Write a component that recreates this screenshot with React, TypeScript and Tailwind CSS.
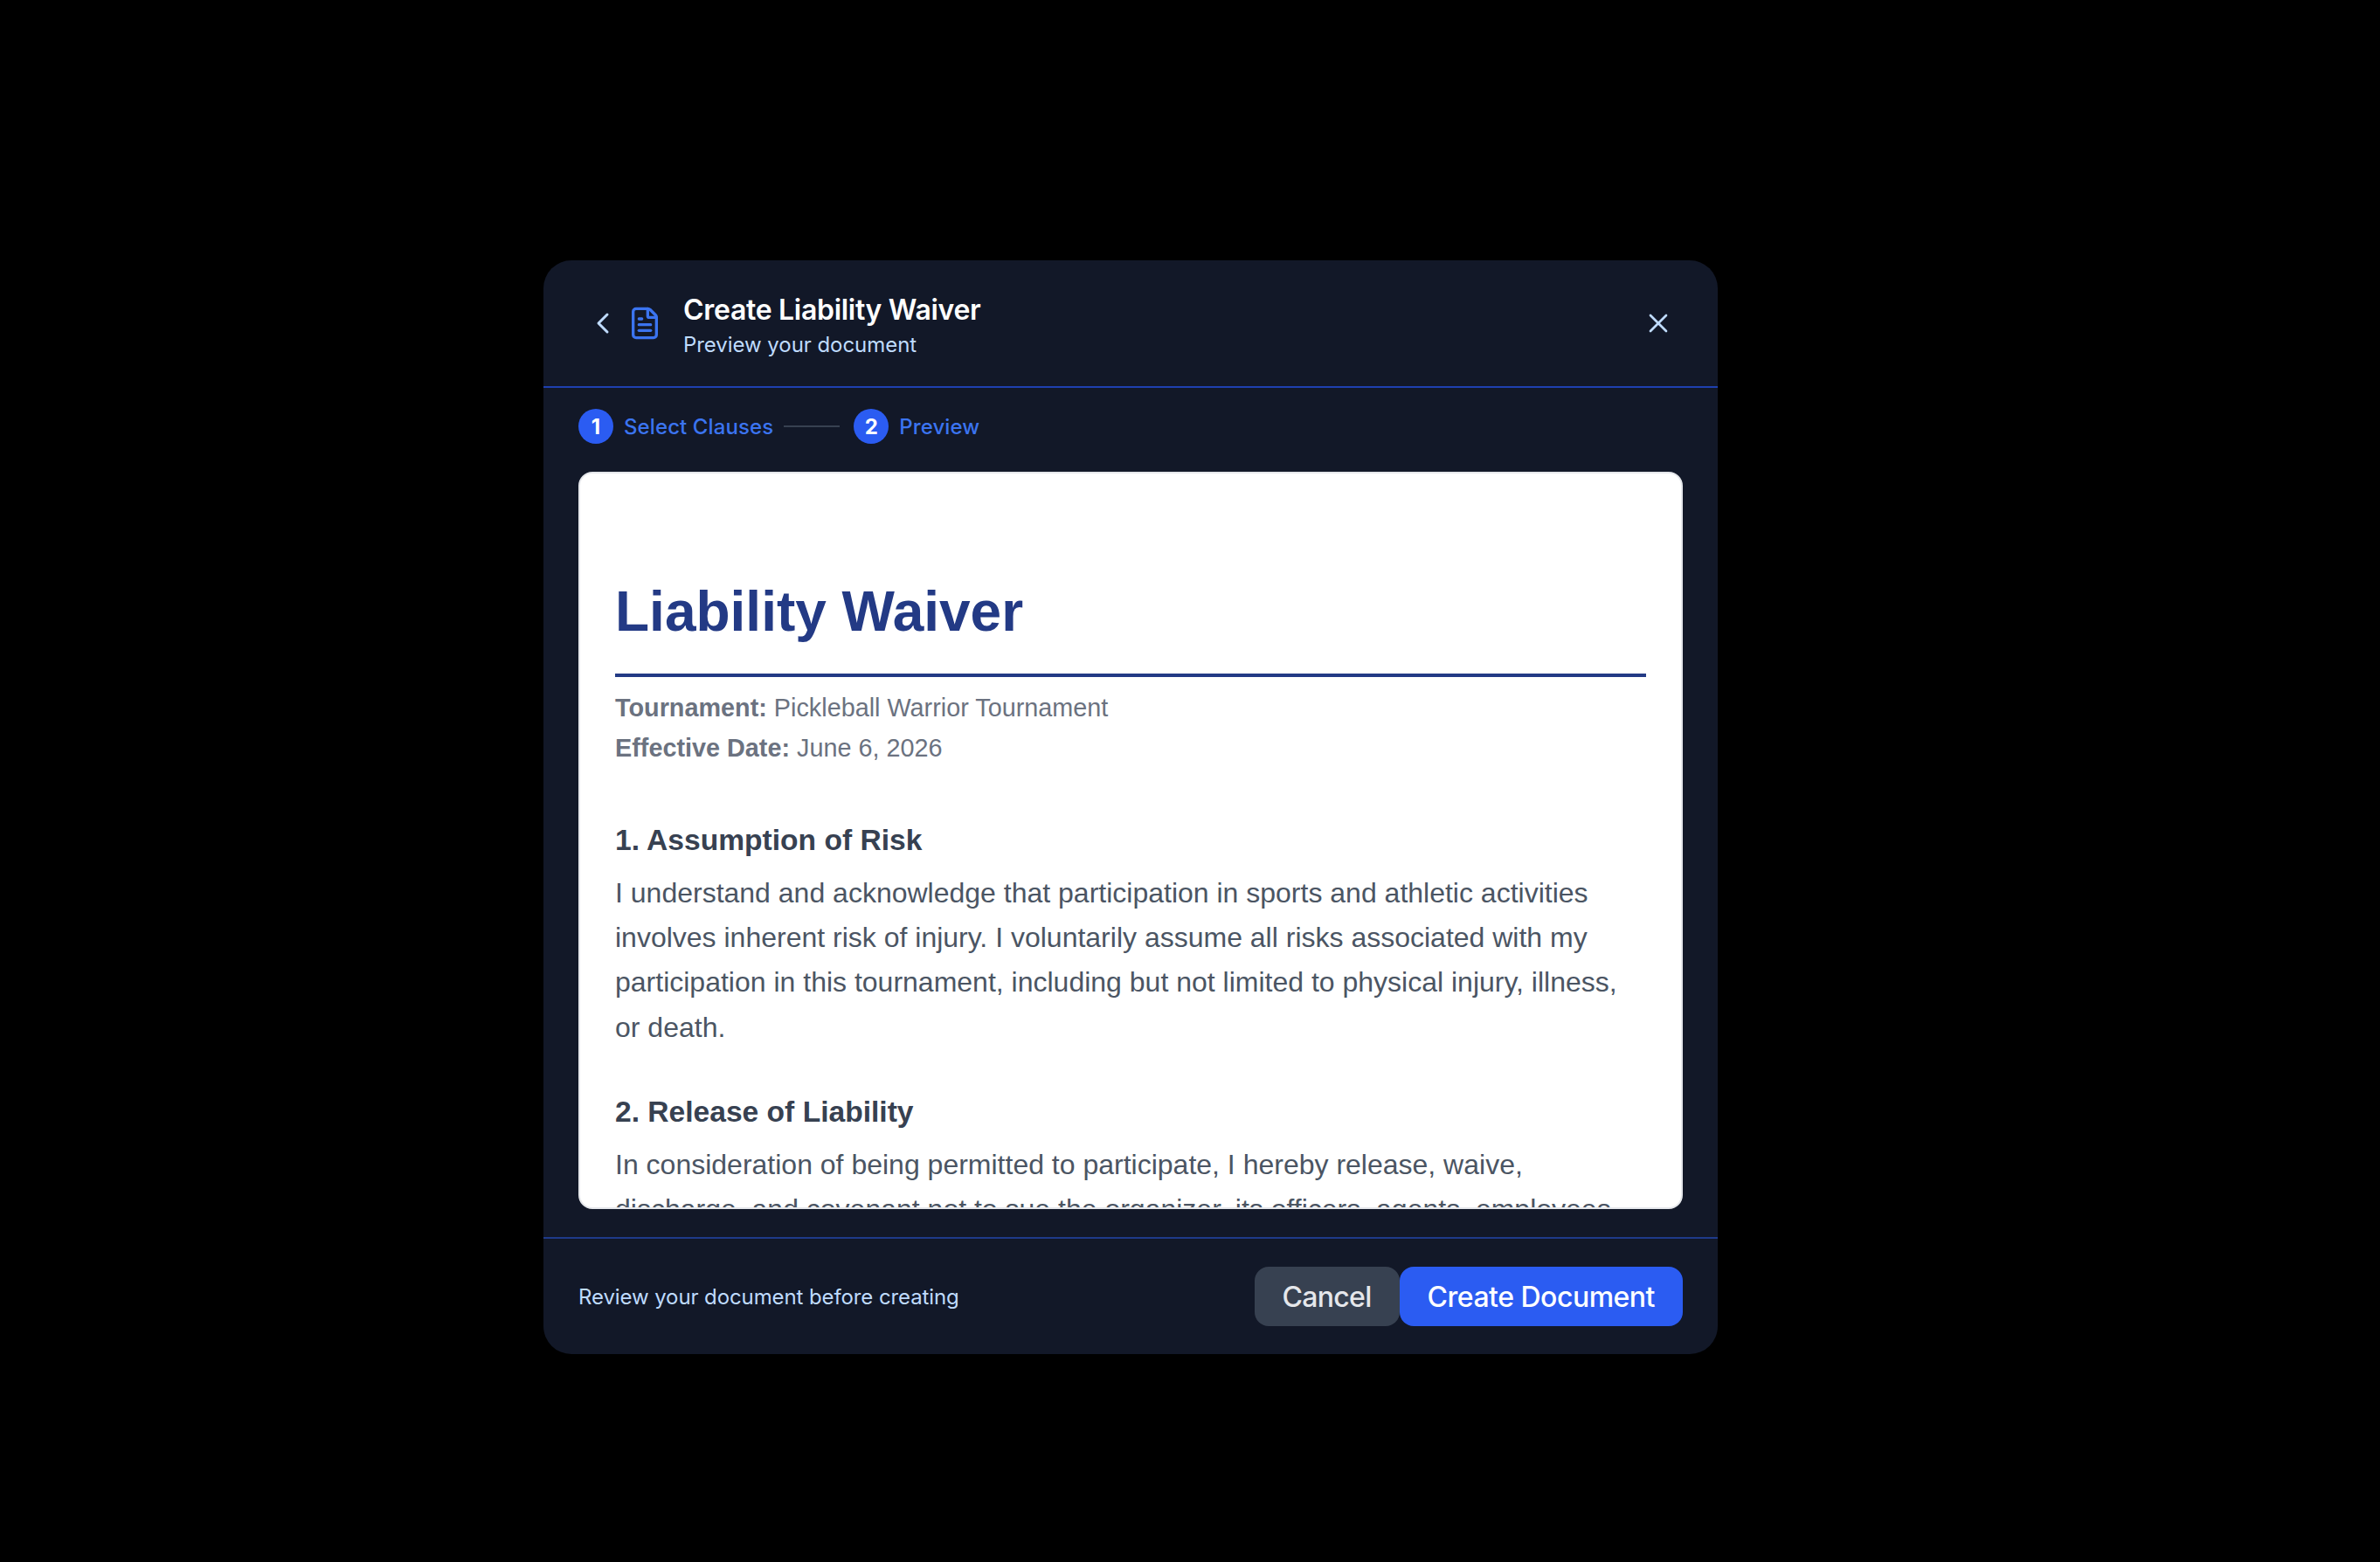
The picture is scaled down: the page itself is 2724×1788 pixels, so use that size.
import { ChevronLeft, FileText, X } from 'lucide-react';

const inter = { fontFamily: 'Inter, sans-serif' };

function Step({ num, label }: { num: number; label: string }) {
  return (
    <div className="flex items-center gap-3">
      <div className="w-10 h-10 pt-px rounded-full bg-[#2b5cf2] flex items-center justify-center text-white text-[24px] font-bold leading-none">
        {num}
      </div>
      <span className="pt-0.5 text-[24px] font-medium tracking-[0.1px] text-[#3b74f0] leading-none">{label}</span>
    </div>
  );
}

export default function App() {
  return (
    <div className="min-h-screen bg-black pl-[622px] pt-[298px]">
      <div
        style={inter}
        className="w-[1344px] h-[1252px] bg-[#121828] rounded-[32px] flex flex-col overflow-hidden"
      >
        {/* Header */}
        <div className="h-[146px] px-10 flex items-center justify-between border-b-2 border-[#1e40af] shrink-0">
          <div className="flex items-center">
            <button className="p-2 text-[#bfdbfe]">
              <ChevronLeft className="w-10 h-10" strokeWidth={1.8} />
            </button>
            <FileText className="w-10 h-10 text-[#3b74f0]" strokeWidth={2} />
            <div className="ml-6 mt-0.5">
              <h2 className="text-[32px] font-semibold tracking-[-0.3px] text-white leading-[48px]">
                Create Liability Waiver
              </h2>
              <p className="text-[24px] tracking-[-0.05px] text-[#bfdbfe] leading-[32px]">Preview your document</p>
            </div>
          </div>
          <button className="p-2.5 text-[#bfdbfe]">
            <X className="w-9 h-9" strokeWidth={1.8} />
          </button>
        </div>

        {/* Steps */}
        <div className="flex items-center px-10 pt-6 pb-8 shrink-0">
          <Step num={1} label="Select Clauses" />
          <div className="w-16 h-0.5 bg-[#374151] mx-3" />
          <div className="ml-1">
            <Step num={2} label="Preview" />
          </div>
        </div>

        {/* Document preview */}
        <div className="flex-1 min-h-0 mx-10 bg-white rounded-2xl border-2 border-[#e5e7eb] overflow-hidden">
          <div className="px-10 pt-[118px]" style={{ fontFamily: '"Liberation Sans", Arial, sans-serif' }}>
            <h1 className="text-[64px] font-bold text-[#233a85] leading-[80px] pb-[31px] border-b-4 border-[#233a85]">
              Liability Waiver
            </h1>
            <div className="mt-[12px] text-[28.8px] leading-[46px] text-[#6b7280]">
              <p>
                <strong>Tournament:</strong> Pickleball Warrior Tournament
              </p>
              <p>
                <strong>Effective Date:</strong> June 6, 2026
              </p>
            </div>
            <h3 className="mt-[61px] text-[33.6px] font-bold text-[#374151] leading-[44px]">1. Assumption of Risk</h3>
            <p className="mt-[13px] text-[32px] leading-[51.2px] text-[#4b5563]">
              I understand and acknowledge that participation in sports and athletic activities involves inherent risk
              of injury. I voluntarily assume all risks associated with my participation in this tournament, including
              but not limited to physical injury, illness, or death.
            </p>
            <h3 className="mt-[49px] text-[33.6px] font-bold text-[#374151] leading-[44px]">2. Release of Liability</h3>
            <p className="mt-[13px] text-[32px] leading-[51.2px] text-[#4b5563]">
              In consideration of being permitted to participate, I hereby release, waive, discharge, and covenant not
              to sue the organizer, its officers, agents, employees, and volunteers from any and all claims.
            </p>
          </div>
        </div>

        {/* Footer */}
        <div className="mt-[32px] h-[134px] px-10 flex items-center justify-between border-t-2 border-[#1e3a8a] shrink-0">
          <p className="pt-0.5 text-[24px] tracking-[-0.1px] text-[#bfdbfe]">Review your document before creating</p>
          <div className="flex">
            <button className="h-[68px] pt-0.5 px-8 rounded-2xl bg-[#374151] text-[#e5e7eb] text-[32px] tracking-[-0.7px] font-medium">
              Cancel
            </button>
            <button className="h-[68px] pt-0.5 px-8 rounded-2xl bg-[#2b5cf2] text-white text-[32px] tracking-[-0.5px] font-medium">
              Create Document
            </button>
          </div>
        </div>
      </div>
    </div>
  );
}
